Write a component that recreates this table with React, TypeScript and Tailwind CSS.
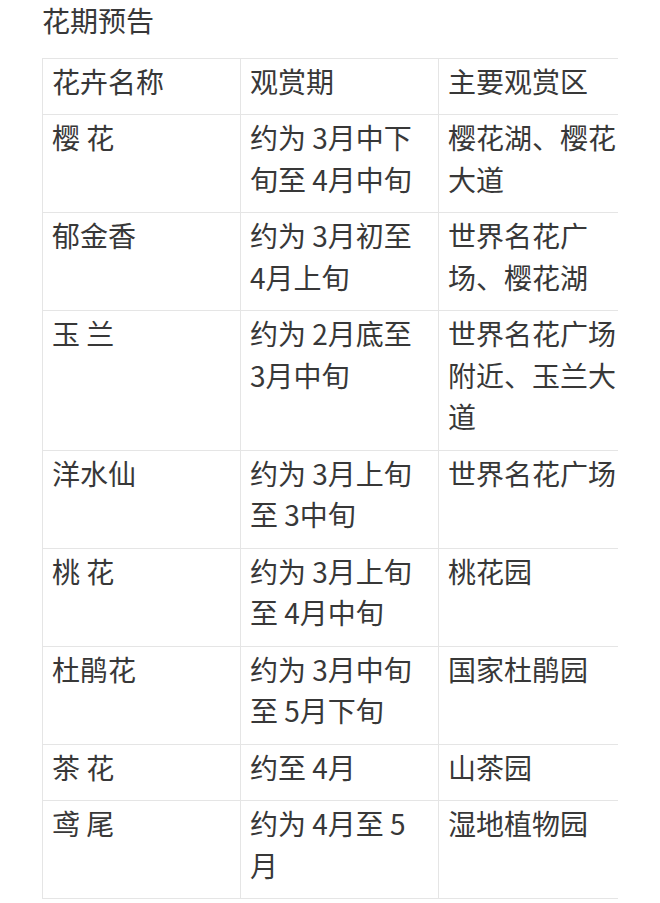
const rows = [
  ["樱 花", "约为 3月中下旬至 4月中旬", "樱花湖、樱花大道"],
  ["郁金香", "约为 3月初至 4月上旬", "世界名花广场、樱花湖"],
  ["玉 兰", "约为 2月底至 3月中旬", "世界名花广场附近、玉兰大道"],
  ["洋水仙", "约为 3月上旬至 3中旬", "世界名花广场"],
  ["桃 花", "约为 3月上旬至 4月中旬", "桃花园"],
  ["杜鹃花", "约为 3月中旬至 5月下旬", "国家杜鹃园"],
  ["茶 花", "约至 4月", "山茶园"],
  ["鸢 尾", "约为 4月至 5月", "湿地植物园"],
];

const cell = "border border-[#e5e5e5] px-[9px] pt-[2px] pb-[12px] align-top text-left font-normal";

export default function App() {
  return (
    <div className="min-h-screen bg-white px-[42px] font-['Noto_Sans_CJK_SC',sans-serif] text-[28px] leading-[41.5px] text-[#383838]">
      <p>花期预告</p>
      <div className="mt-[16px] overflow-hidden">
        <table className="w-[595px] table-fixed border-collapse">
          <colgroup>
            <col className="w-[198px]" />
            <col className="w-[198px]" />
            <col className="w-[198px]" />
          </colgroup>
          <thead>
            <tr>
              <th className={cell}>花卉名称</th>
              <th className={cell}>观赏期</th>
              <th className={cell}>主要观赏区</th>
            </tr>
          </thead>
          <tbody>
            {rows.map((r, i) => (
              <tr key={i}>
                {r.map((c, j) => (
                  <td key={j} className={cell}>
                    {c}
                  </td>
                ))}
              </tr>
            ))}
          </tbody>
        </table>
      </div>
    </div>
  );
}
